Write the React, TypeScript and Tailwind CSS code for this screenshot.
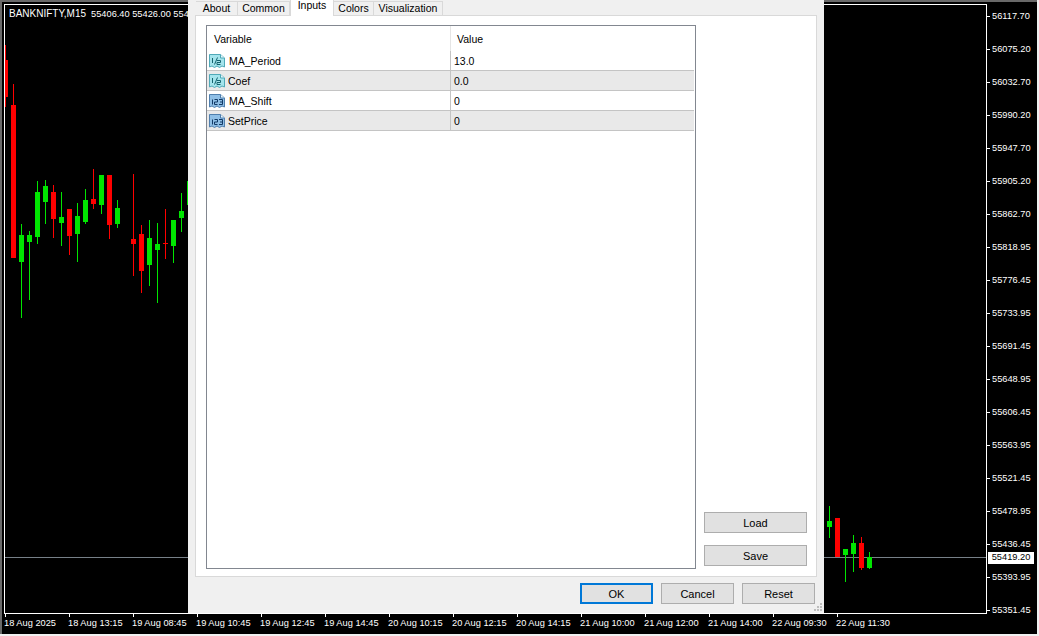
const prices = ['56117.70', '56075.20', '56032.70', '55990.20', '55947.70', '55905.20', '55862.70', '55818.95', '55776.45', '55733.95', '55691.45', '55648.95', '55606.45', '55563.95', '55521.45', '55478.95', '55436.45', '55393.95', '55351.45']

const times = ['18 Aug 2025', '18 Aug 13:15', '19 Aug 08:45', '19 Aug 10:45', '19 Aug 12:45', '19 Aug 14:45', '20 Aug 10:15', '20 Aug 12:15', '20 Aug 14:15', '21 Aug 10:00', '21 Aug 12:00', '21 Aug 14:00', '22 Aug 09:30', '22 Aug 11:30']

// x, wick top, wick bottom, body top, body bottom, up?
const candles: [number, number, number, number, number, boolean][] = [
  [5, 45, 107, 60, 97, false],
  [13, 84, 258, 105, 258, false],
  [21, 224, 318, 235, 262, true],
  [29, 231, 300, 235, 242, true],
  [37, 181, 244, 192, 237, true],
  [45, 180, 224, 186, 202, true],
  [53, 185, 238, 192, 219, false],
  [61, 192, 246, 217, 223, true],
  [69, 209, 255, 209, 236, false],
  [77, 203, 262, 216, 234, true],
  [85, 189, 224, 200, 222, true],
  [93, 169, 209, 199, 204, false],
  [101, 175, 214, 175, 205, true],
  [109, 175, 239, 175, 225, false],
  [117, 200, 228, 208, 224, true],
  [133, 174, 276, 239, 244, false],
  [141, 225, 293, 234, 271, false],
  [149, 220, 286, 238, 265, true],
  [157, 223, 303, 244, 250, true],
  [165, 209, 259, 243, 244, false],
  [173, 220, 263, 220, 246, true],
  [181, 193, 232, 211, 218, true],
  [189, 181, 205, 181, 205, true],
  [829, 506, 538, 521, 527, true],
  [837, 518, 557, 518, 557, false],
  [845, 549, 582, 549, 555, true],
  [853, 535, 572, 543, 554, true],
  [861, 537, 570, 543, 568, false],
  [869, 552, 569, 557, 568, true],
]

const rows = [
  { name: 'MA_Period', value: '13.0', kind: 'double', gap: 'gap-[3px]' },
  { name: 'Coef', value: '0.0', kind: 'double', gap: 'gap-[2px]' },
  { name: 'MA_Shift', value: '0', kind: 'int', gap: 'gap-[3px]' },
  { name: 'SetPrice', value: '0', kind: 'int', gap: 'gap-[2px]' },
]

const tabs = [
  { label: 'About', width: 'w-[42px]' },
  { label: 'Common', width: 'w-[52px]' },
  { label: 'Inputs', width: 'w-[44px]' },
  { label: 'Colors', width: 'w-[40px]' },
  { label: 'Visualization', width: 'w-[69px]' },
]

function TypeIcon({ kind }: { kind: string }) {
  const isInt = kind === 'int'
  const fill = isInt ? '#8fbfe6' : '#a4e4ec'
  const edge = isInt ? '#4f7fae' : '#4fa9b8'
  return (
    <svg width="17" height="17" viewBox="0 0 17 17" className="shrink-0">
      <path d="M0.5 2.5H11.5L15.5 6V15L13 14L10.5 15.500L8 14L5.500 15.500L3 14L0.500 15Z" fill={fill} stroke={edge} />
      <path d="M11.500 2.500V6H15.500" fill="#e8f6fb" stroke={edge} />
      {isInt ? (
        <path d="M3.500 7.500V12.500M5.500 7.500H8.500V10H5.500V12.500H8.500M10 7.500H13.500V12.500H10M11 10H13.500" fill="none" stroke="#123a66" strokeWidth="1" />
      ) : (
        <path d="M3.500 6V11M8.500 5.500L5.500 12.500M8 8.500H11.500V10.500H8V12.500H11.500" fill="none" stroke="#14636e" strokeWidth="1" />
      )}
    </svg>
  )
}

function DialogButton({ label, primary, className }: { label: string; primary?: boolean; className: string }) {
  return (
    <button
      className={`flex items-center justify-center bg-[#e1e1e1] pt-px text-[11px] text-black ${primary ? 'border-2 border-[#0078d7]' : 'border border-[#adadad]'} ${className}`}
    >
      {label}
    </button>
  )
}

export default function App() {
  return (
    <div className="relative h-[636px] w-[1039px] overflow-hidden bg-[#f0f0f0] font-['Liberation_Sans',sans-serif]">
      {/* chart window */}
      <div className="h-[634px] w-[1037px] border-l-2 border-t-2 border-[#696969] bg-black pl-[2px] pt-[2px] text-white">
        <div className="flex h-[610px]">
          <div className="relative h-[610px] w-[983px] border border-white">
            <svg width="981" height="608" viewBox="5 5 981 608" className="absolute left-0 top-0">
              <rect x="5" y="557" width="981" height="1" fill="#778088" />
              {candles.map(([x, wt, wb, bt, bb, up]) => {
                const color = up ? '#00e600' : '#ff0000'
                return (
                  <g key={x} fill={color}>
                    <rect x={x} y={wt} width="1" height={wb - wt} />
                    <rect x={x - 2} y={bt} width="5" height={Math.max(bb - bt, 1)} />
                  </g>
                )
              })}
            </svg>
            <div className="absolute left-[4px] top-[3px] flex gap-[5px] leading-3">
              <span className="text-[10px]">BANKNIFTY,M15</span>
              <span className="text-[9.25px]">55406.40 55426.00 554</span>
            </div>
          </div>
          <div className="relative w-[50px]">
            <div className="-mt-[4px] flex flex-col">
              {prices.map((p) => (
                <div key={p} className="flex h-[33px] shrink-0 items-center gap-[2px] text-[9.25px]">
                  <span className="h-px w-[3px] bg-white" />
                  <span>{p}</span>
                </div>
              ))}
            </div>
            <span className="absolute left-px top-[548px] flex h-[12px] w-[46px] items-center justify-center bg-white text-[9.25px] text-black">55419.20</span>
          </div>
        </div>
        <div className="flex">
          {times.map((t) => (
            <div key={t} className="relative h-[20px] w-[64px] shrink-0 pt-[3px] text-[9.25px] leading-3">
              <span className="absolute left-px top-0 h-[3px] w-px bg-white" />
              {t}
            </div>
          ))}
        </div>
      </div>

      {/* properties dialog */}
      <div className="absolute left-[188px] top-0 flex h-[613px] w-[636px] flex-col bg-[#f0f0f0] px-[7px] text-[11px] leading-none text-black">
        <div className="flex h-[15px] items-end pl-px text-[10.5px]">
          {tabs.map((t) =>
            t.label === 'Inputs' ? (
              <div key={t.label} className={`relative z-10 -mb-px flex h-[16px] items-start justify-center border-x border-[#d9d9d9] bg-white ${t.width}`}>
                {t.label}
              </div>
            ) : (
              <div key={t.label} className={`flex h-[14px] items-center justify-center border-r border-t border-[#d9d9d9] pb-px ${t.width}`}>
                {t.label}
              </div>
            ),
          )}
        </div>
        <div className="flex h-[562px] border border-[#d9d9d9] bg-white pl-[10px] pt-[9px]">
          <div className="h-[544px] w-[490px] border border-[#828790]">
            <div className="flex h-[25px] items-center pl-[7px] text-[10.5px]">
              <span className="w-[236px] pt-px">Variable</span>
              <span className="border-l border-[#e5e5e5] pl-[6px] pt-px leading-[24px]">Value</span>
            </div>
            {rows.map((r, i) => (
              <div key={r.name} className={`flex h-[20px] w-[487px] items-center border-b border-[#c4c4c4] text-[10.5px] ${i % 2 ? 'bg-[#e9e9e9]' : 'bg-white'}`}>
                <div className={`flex h-full w-[243px] items-center pl-[2px] ${r.gap}`}>
                  <TypeIcon kind={r.kind} />
                  <span className="pt-px">{r.name}</span>
                </div>
                <div className="flex h-full items-center border-l border-[#c4c4c4] pl-[3px] pt-px">{r.value}</div>
              </div>
            ))}
          </div>
          <div className="flex h-[544px] flex-col justify-end gap-[12px] pb-[3px] pl-[8px]">
            <DialogButton label="Load" className="h-[21px] w-[103px]" />
            <DialogButton label="Save" className="h-[21px] w-[103px]" />
          </div>
        </div>
        <div className="flex justify-end gap-[8px] pr-[2px] pt-[6px]">
          <DialogButton label="OK" primary className="h-[21px] w-[73px]" />
          <DialogButton label="Cancel" className="h-[21px] w-[73px]" />
          <DialogButton label="Reset" className="h-[21px] w-[73px]" />
        </div>
        <svg width="10" height="10" viewBox="0 0 10 10" className="absolute bottom-px right-px" fill="#bdbdbd">
          <rect x="7" y="1" width="2" height="2" />
          <rect x="4" y="4" width="2" height="2" />
          <rect x="7" y="4" width="2" height="2" />
          <rect x="1" y="7" width="2" height="2" />
          <rect x="4" y="7" width="2" height="2" />
          <rect x="7" y="7" width="2" height="2" />
        </svg>
      </div>
    </div>
  )
}
